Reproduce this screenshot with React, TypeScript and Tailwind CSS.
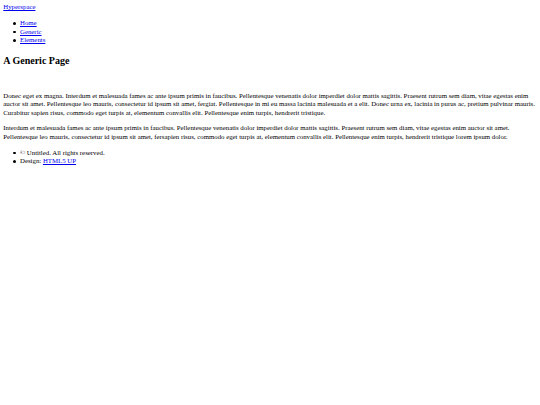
export default function App() {
  const nav = ["Home", "Generic", "Elements"];

  const Bullet = () => (
    <span className="mr-[4.2px] inline-block h-[2.5px] w-[2.5px] shrink-0 rounded-full bg-black"></span>
  );

  return (
    <div className="min-h-[405px] bg-white px-[3.3px] py-[3.3px] font-['Liberation_Serif','Times_New_Roman',serif] text-[6.82px] leading-[8.5px] text-black">
      <header>
        <a href="#" className="text-[#0000ee] underline">Hyperspace</a>
        <nav>
          <ul className="mt-[7.5px] mb-[7px] pl-[10px]">
            {nav.map((n) => (
              <li key={n} className="flex items-center">
                <Bullet />
                <a href="#" className="text-[#0000ee] underline">{n}</a>
              </li>
            ))}
          </ul>
        </nav>
      </header>

      <main>
        <h1 className="mt-[10px] mb-[24.5px] text-[10px] leading-[12.5px] font-bold">A Generic Page</h1>
        <p className="my-[7px]">
          Donec eget ex magna. Interdum et malesuada fames ac ante ipsum primis in faucibus. Pellentesque venenatis dolor imperdiet dolor mattis sagittis. Praesent rutrum sem diam, vitae egestas enim auctor sit amet. Pellentesque leo mauris, consectetur id ipsum sit amet, fergiat. Pellentesque in mi eu massa lacinia malesuada et a elit. Donec urna ex, lacinia in purus ac, pretium pulvinar mauris. Curabitur sapien risus, commodo eget turpis at, elementum convallis elit. Pellentesque enim turpis, hendrerit tristique.
        </p>
        <p className="my-[7px]">
          Interdum et malesuada fames ac ante ipsum primis in faucibus. Pellentesque venenatis dolor imperdiet dolor mattis sagittis. Praesent rutrum sem diam, vitae egestas enim auctor sit amet. Pellentesque leo mauris, consectetur id ipsum sit amet, fersapien risus, commodo eget turpis at, elementum convallis elit. Pellentesque enim turpis, hendrerit tristique lorem ipsum dolor.
        </p>
      </main>

      <footer>
        <ul className="my-[7.5px] pl-[10px]">
          <li className="flex items-center">
            <Bullet />
            <span>© Untitled. All rights reserved.</span>
          </li>
          <li className="flex items-center">
            <Bullet />
            <span>
              Design: <a href="#" className="text-[#0000ee] underline">HTML5 UP</a>
            </span>
          </li>
        </ul>
      </footer>
    </div>
  );
}
